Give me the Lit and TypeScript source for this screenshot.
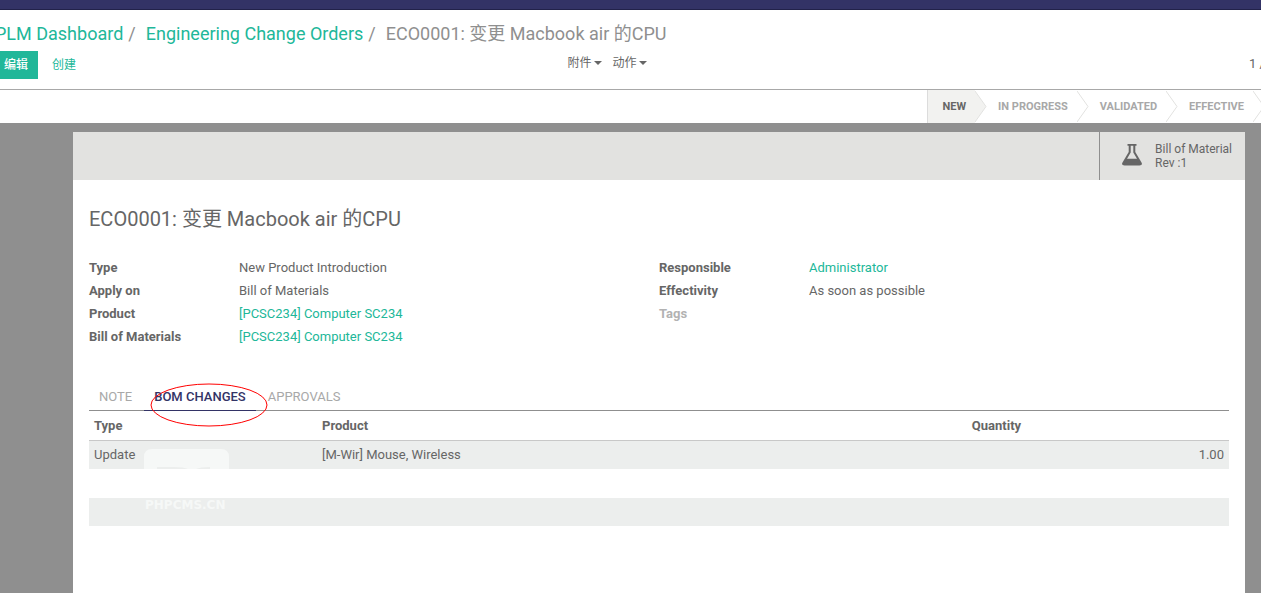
import { LitElement, html, css } from "lit";
import { customElement } from "lit/decorators.js";

const STAGES = ["New", "In Progress", "Validated", "Effective"];

interface Field {
  label: string;
  value?: string;
  link?: boolean;
}

const LEFT: Field[] = [
  { label: "Type", value: "New Product Introduction" },
  { label: "Apply on", value: "Bill of Materials" },
  { label: "Product", value: "[PCSC234] Computer SC234", link: true },
  { label: "Bill of Materials", value: "[PCSC234] Computer SC234", link: true },
];

const RIGHT: Field[] = [
  { label: "Responsible", value: "Administrator", link: true },
  { label: "Effectivity", value: "As soon as possible" },
  { label: "Tags" },
];

const base = css`
  *,
  *::before,
  *::after {
    box-sizing: border-box;
  }
  a {
    color: #21b799;
    text-decoration: none;
  }
  button {
    font: inherit;
    color: inherit;
    background: none;
    border: 0;
    margin: 0;
    padding: 0;
    cursor: pointer;
  }
`;

@customElement("control-panel")
export class ControlPanel extends LitElement {
  static styles = [
    base,
    css`
      :host {
        display: block;
        overflow: hidden;
        border-bottom: 1px solid #a8a8a8;
      }
      .crumbs {
        display: flex;
        margin: 0 0 0 -5px;
        padding: 11px 0 0;
        list-style: none;
        font-size: 18px;
        line-height: 26px;
        color: #8f8f8f;
        white-space: nowrap;
      }
      .crumbs li + li::before {
        content: "/";
        padding: 0 10px 0 5px;
      }
      .bar {
        display: grid;
        grid-template-columns: 9fr 11fr;
        align-items: start;
        height: 42px;
        padding-top: 4px;
        font-size: 12px;
      }
      .left {
        display: flex;
      }
      .left button {
        height: 28px;
        padding: 0 14px;
        color: #21b799;
      }
      .left .edit {
        padding: 0 10px 0 4px;
        background: #21b799;
        color: #fff;
        font-weight: 500;
      }
      .right {
        display: flex;
        gap: 10px;
        line-height: 22px;
      }
      .right button {
        display: flex;
        align-items: center;
        gap: 3px;
      }
      .caret {
        border: 4px solid transparent;
        border-top-color: currentColor;
        border-bottom: 0;
      }
      .pager {
        margin-left: auto;
        margin-right: -4px;
        padding-top: 2px;
        font-size: 13px;
        white-space: nowrap;
      }
    `,
  ];

  render() {
    return html`
      <nav aria-label="Breadcrumb">
        <ol class="crumbs">
          <li><a href="#">PLM Dashboard</a></li>
          <li><a href="#">Engineering Change Orders</a></li>
          <li>ECO0001: 变更 Macbook air 的CPU</li>
        </ol>
      </nav>
      <div class="bar">
        <div class="left">
          <button class="edit">编辑</button>
          <button>创建</button>
        </div>
        <div class="right">
          <button>附件<span class="caret"></span></button>
          <button>动作<span class="caret"></span></button>
          <span class="pager">1 /</span>
        </div>
      </div>
    `;
  }
}

@customElement("status-bar")
export class StatusBar extends LitElement {
  static styles = [
    base,
    css`
      :host {
        display: flex;
        justify-content: flex-end;
        height: 33px;
        overflow: hidden;
      }
      .stages {
        display: flex;
        border-left: 1px solid #dcdcdc;
      }
      .stage {
        display: flex;
        align-items: center;
        font-size: 11px;
        font-weight: 700;
        text-transform: uppercase;
        color: #a8a8a8;
        white-space: nowrap;
      }
      .stage span {
        padding: 0 9px 0 11px;
      }
      .stage svg {
        width: 12px;
        height: 33px;
        flex: none;
        fill: none;
        stroke: #e2e2e0;
      }
      .current span {
        align-self: stretch;
        display: flex;
        align-items: center;
        padding: 0 9px 0 15px;
        background: #f2f2f0;
        color: #666;
      }
      .current svg {
        fill: #f2f2f0;
      }
      .stage:last-child svg {
        margin-right: -4px;
      }
    `,
  ];

  render() {
    return html`
      <div class="stages">
        ${STAGES.map(
          (name, i) => html`<button class="stage ${i === 0 ? "current" : ""}">
            <span>${name}</span>
            <svg viewBox="0 0 12 33" aria-hidden="true"><path d="M0 1L11 16.500L0 32" /></svg>
          </button>`,
        )}
      </div>
    `;
  }
}

@customElement("eco-sheet")
export class EcoSheet extends LitElement {
  static styles = [
    base,
    css`
      :host {
        display: block;
        background: #fff;
      }
      .buttons {
        display: flex;
        justify-content: flex-end;
        height: 48px;
        background: #e2e2e0;
      }
      .stat {
        display: flex;
        align-items: center;
        gap: 13px;
        padding: 0 13px 0 22px;
        border-left: 1px solid #8f8f8f;
        font-size: 12px;
        line-height: 14px;
        text-align: left;
      }
      .flask {
        width: 20px;
        height: 22px;
        margin-bottom: 2px;
        fill: #666;
      }
      .body {
        padding: 24px 16px 0;
      }
      h1 {
        margin: 0;
        font-size: 20px;
        line-height: 30px;
        font-weight: 400;
      }
      .groups {
        display: grid;
        grid-template-columns: 1fr 1fr;
        padding-top: 22px;
      }
      dl {
        display: grid;
        grid-template-columns: 150px 1fr;
        align-content: start;
        margin: 0;
        line-height: 23px;
      }
      dt {
        font-weight: 700;
      }
      dd {
        margin: 0;
      }
      .empty {
        color: #b2b2b2;
      }
      .tabs {
        display: flex;
        gap: 2px;
        margin-top: 35px;
        border-bottom: 1px solid #8f8f8f;
      }
      .tabs button {
        height: 28px;
        margin-bottom: -1px;
        padding: 0 10px;
        text-transform: uppercase;
        color: #a8a8a8;
      }
      .tabs .active {
        position: relative;
        border-bottom: 1px solid #333366;
        color: #333366;
        font-weight: 500;
      }
      .ring {
        position: absolute;
        left: 6px;
        top: 0;
        width: 118px;
        height: 44px;
        fill: none;
        stroke: #f00;
        pointer-events: none;
      }
      table {
        width: 100%;
        border-collapse: separate;
        border-spacing: 0;
        table-layout: fixed;
      }
      th,
      td {
        padding: 0 5px;
        text-align: left;
      }
      th {
        height: 30px;
        border-bottom: 1px solid #c8c8c8;
      }
      td {
        height: 28px;
      }
      .gap td {
        height: 29px;
      }
      .shade {
        background: #eceeed;
      }
      .type {
        width: 20%;
      }
      .qty {
        width: 23%;
      }
      .num {
        text-align: right;
      }
      .first {
        position: relative;
      }
      .mark {
        position: absolute;
        left: 55px;
        top: 8px;
        width: 88px;
        height: 64px;
        fill: #f6f8f7;
        pointer-events: none;
      }
      .mark text {
        font: 700 12px "DejaVu Sans", sans-serif;
      }
    `,
  ];

  private group(fields: Field[]) {
    return html`<dl>
      ${fields.map(
        (f) => html`
          <dt class=${f.value ? "" : "empty"}>${f.label}</dt>
          <dd>${f.link ? html`<a href="#">${f.value}</a>` : f.value}</dd>
        `,
      )}
    </dl>`;
  }

  render() {
    return html`
      <div class="buttons">
        <button class="stat">
          <svg class="flask" viewBox="1 0 20 22" aria-hidden="true">
            <path
              fill-rule="evenodd"
              d="M6.500 0H15.500V1.800H14.300V8L20.500 18.500Q22 21.500 18.500 21.500H3.500Q0 21.500 1.500 18.500L7.700 8V1.800H6.500ZM9.700 1.800V8.500L6 14.800H16L12.300 8.500V1.800Z"
            />
          </svg>
          <span>Bill of Material<br />Rev :1</span>
        </button>
      </div>
      <div class="body">
        <h1>ECO0001: 变更 Macbook air 的CPU</h1>
        <div class="groups">${this.group(LEFT)}${this.group(RIGHT)}</div>
        <div class="tabs" role="tablist">
          <button role="tab">Note</button>
          <button role="tab" class="active" aria-selected="true">
            BoM Changes
            <svg class="ring" viewBox="0 0 118 44" aria-hidden="true">
              <ellipse cx="59" cy="22" rx="58" ry="21" />
            </svg>
          </button>
          <button role="tab">Approvals</button>
        </div>
        <table>
          <thead>
            <tr>
              <th class="type">Type</th>
              <th>Product</th>
              <th class="qty">Quantity</th>
            </tr>
          </thead>
          <tbody>
            <tr class="shade">
              <td class="first">
                Update
                <svg class="mark" viewBox="0 0 88 64" aria-hidden="true">
                  <path d="M0 20V8Q0 0 8 0H77Q85 0 85 8V20H66V18Q56 18 52 20H44Q40 18 30 18H13V20Z" />
                  <text x="1" y="60">PHPCMS.CN</text>
                </svg>
              </td>
              <td>[M-Wir] Mouse, Wireless</td>
              <td class="num">1.00</td>
            </tr>
            <tr class="gap"><td colspan="3"></td></tr>
            <tr class="shade"><td colspan="3"></td></tr>
          </tbody>
        </table>
      </div>
    `;
  }
}

@customElement("app-root")
export class AppRoot extends LitElement {
  static styles = [
    base,
    css`
      :host {
        display: flex;
        flex-direction: column;
        min-height: 100vh;
        overflow: hidden;
        background: #fff;
        color: #666;
        font: 13px/20px Roboto, "Noto Sans CJK SC", sans-serif;
      }
      .top {
        height: 10px;
        flex: none;
        background: #333366;
        border-bottom: 1px solid #22224a;
      }
      main {
        flex: 1;
        display: flex;
        padding: 9px 16px 0 73px;
        background: #8f8f8f;
      }
      eco-sheet {
        flex: 1;
        min-width: 0;
      }
    `,
  ];

  render() {
    return html`
      <div class="top"></div>
      <control-panel></control-panel>
      <status-bar></status-bar>
      <main><eco-sheet></eco-sheet></main>
    `;
  }
}
